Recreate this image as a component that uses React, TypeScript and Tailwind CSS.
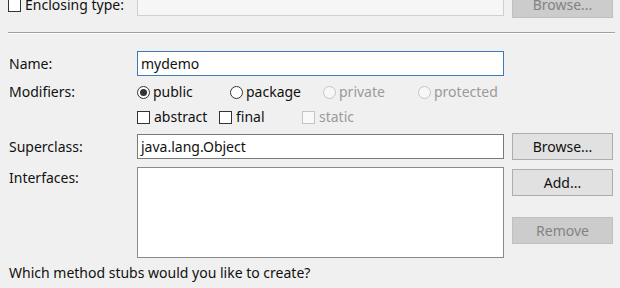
import React from "react";

function Radio({ checked, disabled, label, w }: { checked?: boolean; disabled?: boolean; label: string; w: string }) {
  return (
    <div className={`flex items-center gap-[3px] ${w}`}>
      <span
        className={`flex h-[13px] w-[13px] items-center justify-center rounded-full border ${
          disabled ? "border-[#c4c4c4] bg-[#f7f7f7]" : "border-[#333333] bg-white"
        }`}
      >
        {checked && <span className="h-[7px] w-[7px] rounded-full bg-[#333333]" />}
      </span>
      <span className={disabled ? "text-[#9a9a9a]" : ""}>{label}</span>
    </div>
  );
}

function Check({ disabled, label, w }: { disabled?: boolean; label: string; w: string }) {
  return (
    <div className={`flex items-center gap-[4px] ${w}`}>
      <span
        className={`h-[13px] w-[13px] border ${
          disabled ? "border-[#c4c4c4] bg-[#f9f9f9]" : "border-[#333333] bg-white"
        }`}
      />
      <span className={disabled ? "text-[#9a9a9a]" : ""}>{label}</span>
    </div>
  );
}

function Btn({ label, disabled }: { label: string; disabled?: boolean }) {
  return (
    <div
      className={`flex h-[27px] w-[101px] items-center justify-center border ${
        disabled ? "border-[#bfbfbf] bg-[#cccccc] text-[#838383]" : "border-[#adadad] bg-[#e1e1e1]"
      }`}
    >
      {label}
    </div>
  );
}

export default function App() {
  return (
    <div
      className="h-[288px] w-[620px] overflow-hidden bg-[#f0f0f0] text-[14px] leading-none text-[#111111]"
      style={{ fontFamily: '"Noto Sans", "Open Sans", sans-serif' }}
    >
      {/* Enclosing type row */}
      <div className="-mt-[9px] flex h-[27px] items-start">
        <div className="flex h-[27px] w-[137px] items-end pb-[6px] pl-[8px]">
          <Check label="Enclosing type:" w="" />
        </div>
        <div className="h-[25px] w-[367px] border border-[#d0d0d0] bg-[#f6f6f6]" />
        <div className="ml-[8px]">
          <Btn label="Browse..." disabled />
        </div>
      </div>

      {/* separator */}
      <div className="ml-[8px] mr-[5px] mt-[14px] h-px bg-[#a0a0a0]" />
      <div className="ml-[8px] mr-[5px] h-px bg-white" />

      {/* Name */}
      <div className="mt-[17px] flex h-[25px] items-center">
        <div className="w-[137px] pl-[9px]">Name:</div>
        <div className="flex h-[25px] w-[367px] items-center border border-[#3d7ab8] bg-white pl-[3px]">mydemo</div>
      </div>

      {/* Modifiers */}
      <div className="mt-[6px] flex h-[20px] items-center">
        <div className="w-[137px] pl-[9px]">Modifiers:</div>
        <Radio checked label="public" w="w-[93px]" />
        <Radio label="package" w="w-[93px]" />
        <Radio disabled label="private" w="w-[95px]" />
        <Radio disabled label="protected" w="" />
      </div>

      {/* checkboxes */}
      <div className="mt-[5px] flex h-[20px] items-center">
        <div className="w-[137px]" />
        <Check label="abstract" w="w-[82px]" />
        <Check label="final" w="w-[83px]" />
        <Check disabled label="static" w="" />
      </div>

      {/* Superclass */}
      <div className="mt-[6px] flex h-[27px] items-center">
        <div className="w-[137px] pl-[9px]">Superclass:</div>
        <div className="flex h-[25px] w-[367px] items-center border border-[#7a7a7a] bg-white pl-[3px]">java.lang.Object</div>
        <div className="ml-[8px]">
          <Btn label="Browse..." />
        </div>
      </div>

      {/* Interfaces */}
      <div className="mt-[7px] flex h-[91px] items-start">
        <div className="flex h-[22px] w-[137px] items-center pl-[9px]">Interfaces:</div>
        <div className="h-[91px] w-[367px] border border-[#8a8a8a] bg-white" />
        <div className="ml-[8px] flex flex-col gap-[21px] pt-[2px]">
          <Btn label="Add..." />
          <Btn label="Remove" disabled />
        </div>
      </div>

      <div className="mt-[6px] flex h-[18px] items-center pl-[9px]">Which method stubs would you like to create?</div>
    </div>
  );
}
